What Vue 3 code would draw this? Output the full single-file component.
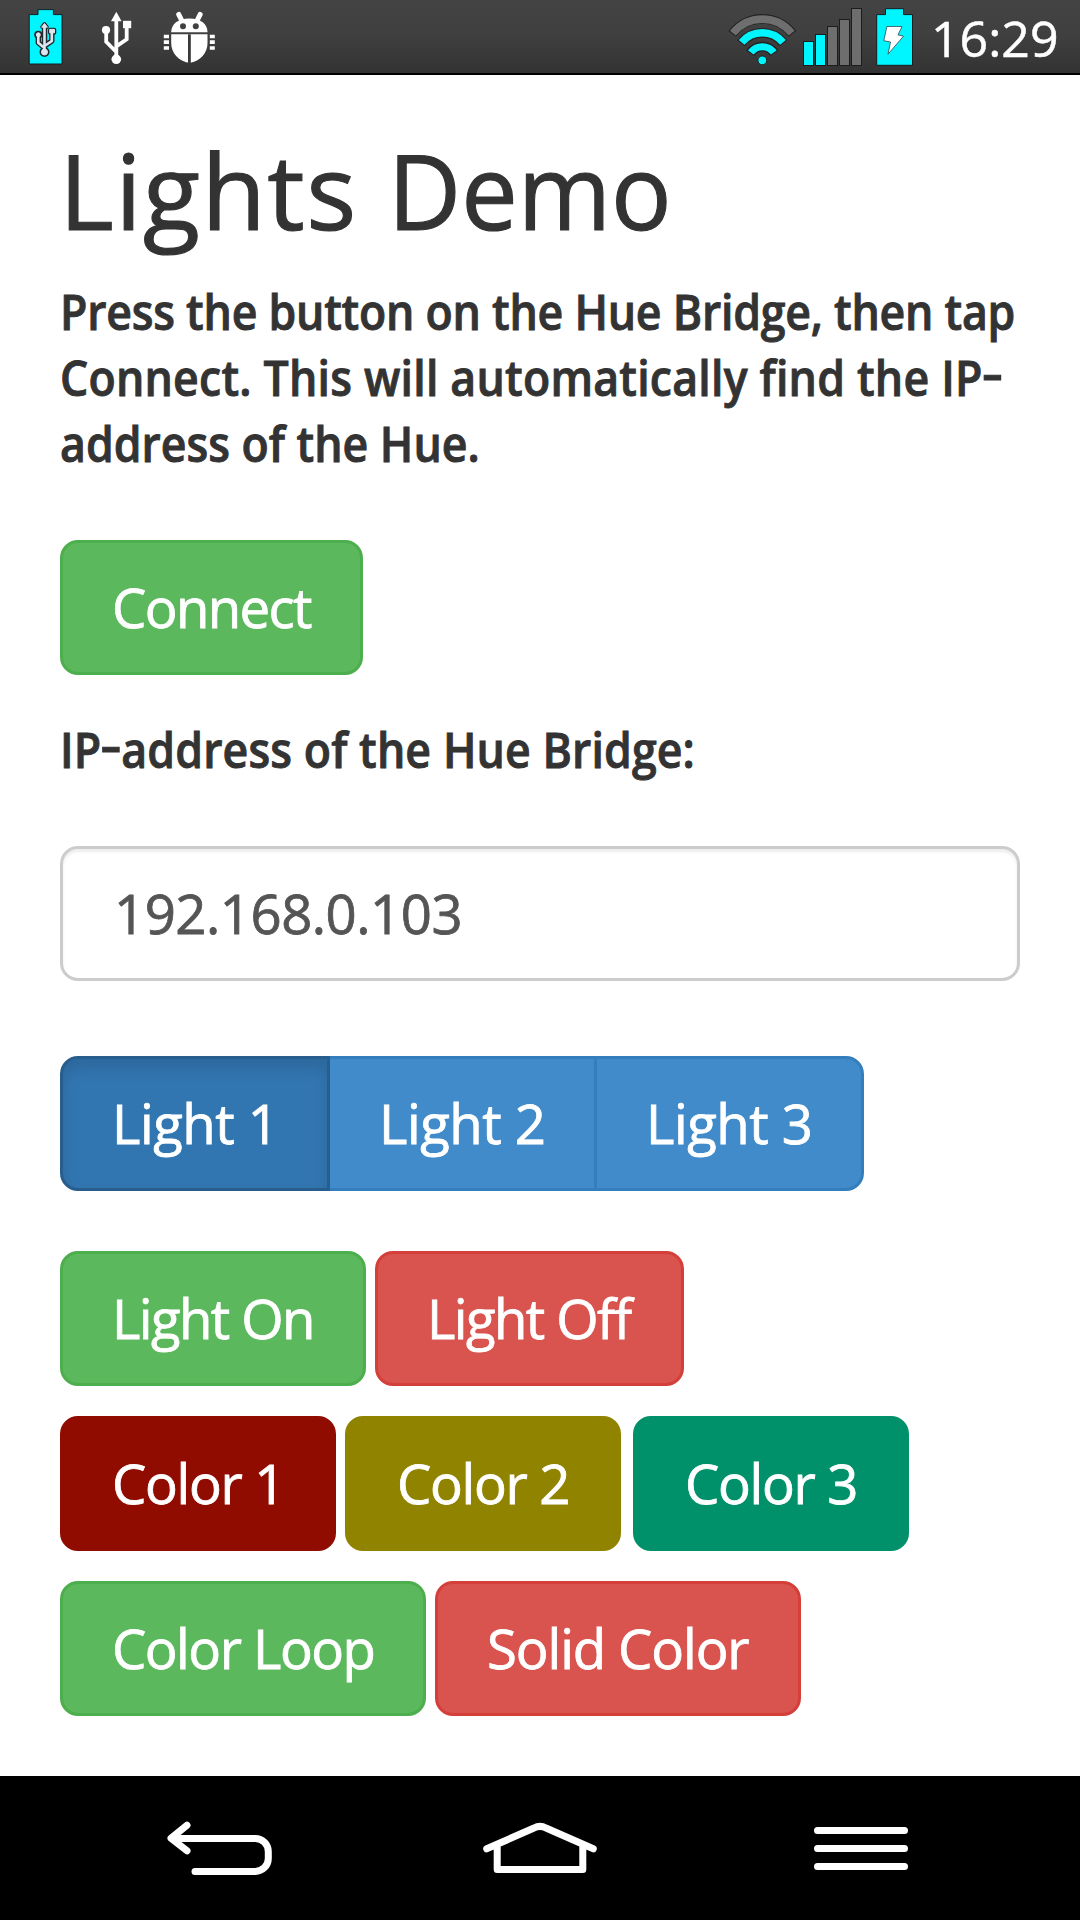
<script setup>
import { ref } from 'vue'

const address = ref('192.168.0.103')
const selected = ref(1)
const bars = [
  { x: 804, top: 41.5, on: true },
  { x: 816, top: 34.5, on: true },
  { x: 828, top: 26.5, on: false },
  { x: 840, top: 19.5, on: false },
  { x: 852, top: 8.5, on: false }
]
</script>

<template>
  <div class="screen">
    <header class="status-bar">
      <div class="icons">
        <svg class="usb-battery" viewBox="27 0 38 73" width="38" height="73">
          <path d="M29.2 14.6H38V9.6H53.4V14.6H62V64H29.2Z" fill="#00f6ff" stroke="#151c20" />
          <g fill="none" stroke="#20292e" stroke-width="5.4" stroke-linejoin="round">
            <path d="M44.5 26V51M38.3 35V42.8L44.5 48M51.8 31V41L44.5 46" />
            <path d="M44.5 23.8L47 27H42Z" stroke-width="3.6" />
            <circle cx="44.5" cy="52" r="2.8" stroke-width="4.4" /><circle cx="38.3" cy="34.8" r="1.9" stroke-width="4.4" />
            <path d="M50 29.7H54.3V32.7H50Z" stroke-width="4" />
          </g>
          <g fill="#dce6ee" stroke="#dce6ee">
            <path d="M44.5 26V51M38.3 35V42.8L44.5 48M51.8 31V41L44.5 46" fill="none" stroke-width="2.6" />
            <path d="M44.5 23.5L47.4 27.2H41.6Z" />
            <circle cx="44.5" cy="52" r="3" /><circle cx="38.3" cy="34.8" r="2" />
            <path d="M49.7 29.4H54.5V32.8H49.7Z" />
          </g>
        </svg>
        <svg class="usb" viewBox="100 0 34 73" width="34" height="73" fill="#fff">
          <path d="M116.3 20V57M106.2 30V41.8L116.3 52M126.7 26V39.3L116.3 46.3" fill="none" stroke="#fff" stroke-width="3.8" />
          <path d="M116.3 11.8L121.6 21.2H111Z" />
          <circle cx="116.3" cy="59.3" r="4.8" />
          <circle cx="106" cy="30" r="4.1" />
          <path d="M123 20.8H131.2V28.2H123Z" />
        </svg>
        <svg class="bug" viewBox="162 0 54 73" width="54" height="73" fill="#fff">
          <path d="M178.7 14.4L182.5 22M200.2 14.4L196.4 22" stroke="#fff" stroke-width="5" stroke-linecap="round" />
          <path d="M171.2 32.2C171.2 24 178 18.4 189.4 18.4S207.5 24 207.5 32.2Z" />
          <path d="M171.2 34.3H207.5V43C207.5 53 200.5 61 189.4 62.9C178.3 61 171.2 53 171.2 43Z" />
          <path d="M163.8 34.8H169V38.2H163.8ZM163.8 40.2H169V44H163.8ZM163.8 46.2H169V49.8H163.8ZM209.8 34.8H214.8V38.2H209.8ZM209.8 40.2H214.8V44H209.8ZM209.8 46.2H214.8V49.8H209.8Z" />
          <path d="M188 34.3H190.8V63H188Z" fill="#393939" />
          <circle cx="183" cy="26.3" r="3" fill="#404040" /><circle cx="195.8" cy="26.3" r="3" fill="#404040" />
        </svg>
      </div>
      <div class="icons">
        <svg class="wifi" viewBox="728 0 70 73" width="70" height="73" fill="none">
          <g stroke="#222" stroke-width="9.8">
            <path d="M732.2 33.9A37.8 37.8 0 0 1 792.4 33.9" />
            <path d="M741 43.2A27 27 0 0 1 783.6 43.2" />
            <path d="M750.2 53.2A14.5 14.5 0 0 1 774.4 53.2" />
          </g>
          <path d="M732.9 33.2A37.8 37.8 0 0 1 791.7 33.2" stroke="#6e6e6e" stroke-width="7.6" />
          <path d="M741.6 42.4A27 27 0 0 1 783 42.4" stroke="#00f6ff" stroke-width="7.4" />
          <path d="M750.8 52.4A14.5 14.5 0 0 1 773.8 52.4" stroke="#00f6ff" stroke-width="7.2" />
          <circle cx="762.3" cy="60.4" r="4.4" fill="#00f6ff" stroke="#222" />
        </svg>
        <svg class="signal" viewBox="802 0 62 73" width="62" height="73">
          <rect v-for="b in bars" :key="b.x" :x="b.x - 0.5" :y="b.top" width="10" :height="65.5 - b.top" :fill="b.on ? '#00f6ff' : '#6e6e6e'" stroke="#1c1c1c" />
        </svg>
        <svg class="battery" viewBox="875 0 39 73" width="39" height="73">
          <path d="M876.7 14.6H885.5V8.7H903.5V14.6H912.5V65.3H876.7Z" fill="#00f6ff" stroke="#151c20" />
          <path d="M886.9 26.5H902L898 34.9L903.5 36.2L888 54.2L890.5 42L883.8 40.7Z" fill="#fff" stroke="#31474d" stroke-width=".8" />
        </svg>
        <span class="clock">16:29</span>
      </div>
    </header>

    <main class="content">
      <h1><span class="word-a">Lights</span> <span class="word-b">Demo</span></h1>
      <p class="copy">
        <span class="line first">Press the button on the Hue Bridge, then tap</span>
        <span class="line second">Connect. This will automatically find the IP<span class="dash">-</span></span>
        <span class="line">address of the Hue.</span>
      </p>
      <button class="btn success connect">Connect</button>
      <label class="copy" for="ip"><span class="line label">IP<span class="dash">-</span>address of the Hue Bridge:</span></label>
      <input id="ip" v-model="address" type="text" />

      <div class="group">
        <button v-for="n in 3" :key="n" class="btn primary" :class="{ active: selected === n }" @click="selected = n">Light {{ n }}</button>
      </div>

      <div class="row">
        <button class="btn success on">Light On</button>
        <button class="btn danger off">Light Off</button>
      </div>
      <div class="row colors">
        <button class="btn red">Color 1</button>
        <button class="btn olive">Color 2</button>
        <button class="btn teal">Color 3</button>
      </div>
      <div class="row">
        <button class="btn success loop">Color Loop</button>
        <button class="btn danger solid">Solid Color</button>
      </div>
    </main>

    <nav class="nav-bar">
      <svg viewBox="160 0 120 144" width="120" height="144">
        <path d="M187 49.2L171 62.2L187 74.8M172 62.5H255.3A13 13 0 0 1 268.3 75.5V82.4A13 13 0 0 1 255.3 95.4H195" />
      </svg>
      <svg viewBox="480 0 120 144" width="120" height="144">
        <path d="M486.7 72.8L534 52Q540 48.8 546 52L593.3 72.8M497.2 69V93.4H582.8V69" />
      </svg>
      <svg viewBox="801 0 120 144" width="120" height="144">
        <path d="M817.5 54.5H904.5M817.5 72.5H904.5M817.5 90.5H904.5" />
      </svg>
    </nav>
  </div>
</template>

<style>
body {
  margin: 0;
  background: #fff;
}
</style>

<style scoped>
.screen {
  display: flex;
  flex-direction: column;
  width: 1080px;
  height: 1920px;
  overflow: hidden;
  background: #fff;
  color: #333;
  font-family: 'Open Sans', 'Noto Sans', sans-serif;
}
.status-bar {
  display: flex;
  justify-content: space-between;
  box-sizing: border-box;
  height: 75px;
  flex: none;
  border-bottom: 2px solid #000;
  background: linear-gradient(#434343 0%, #404040 45%, #333 100%);
}
.icons {
  display: flex;
}
.usb-battery { margin-left: 27px; }
.usb { margin-left: 35px; }
.bug { margin-left: 28px; }
.signal { margin-left: 4px; }
.battery { margin-left: 11px; }
.clock {
  width: 149px;
  margin-left: 17px;
  color: #fff;
  font-size: 50px;
  font-weight: 500;
  line-height: 77px;
  -webkit-text-stroke: 0.5px #fff;
}
.content {
  display: flex;
  flex: 1;
  flex-direction: column;
  align-items: flex-start;
  padding: 57px 60px 0;
}
h1 {
  margin: 0 0 31px -1px;
  font-size: 105px;
  font-weight: 400;
  line-height: 116px;
  white-space: nowrap;
  -webkit-text-stroke: 1.1px #333;
}
.word-a { letter-spacing: 1.4px; }
.word-b {
  display: inline-block;
  margin-left: 3px;
  transform: scaleX(0.96);
  transform-origin: left;
}
.copy {
  display: block;
  margin: 0;
  font-size: 48px;
  font-weight: 600;
  line-height: 66px;
  -webkit-text-stroke: 0.9px #333;
}
.line {
  display: block;
  width: max-content;
  transform: scaleX(0.93);
  transform-origin: left;
}
.first { letter-spacing: -0.25px; }
.second { letter-spacing: 0.23px; }
.label { letter-spacing: 0.12px; }
.dash {
  display: inline-block;
  margin: 0 3px;
  transform: translateY(-5px) scaleX(1.45);
}
.btn {
  box-sizing: border-box;
  height: 135px;
  margin: 0;
  padding: 0 0 1px 49px;
  border: 3px solid;
  border-radius: 18px;
  color: #fff;
  font: 400 54.5px 'Open Sans', 'Noto Sans', sans-serif;
  letter-spacing: -1.3px;
  text-align: left;
  white-space: nowrap;
  -webkit-text-stroke: 0.8px #fff;
}
.success { background: #5cb85c; border-color: #4cae4c; }
.danger { background: #d9534f; border-color: #d43f3a; }
.primary { background: #428bca; border-color: #357ebd; }
.red { background: #900c00; border-color: #900c00; }
.olive { background: #908300; border-color: #908300; }
.teal { background: #00916b; border-color: #00916b; }
.connect {
  width: 303px;
  margin: 63px 0 42px;
  letter-spacing: -1.6px;
}
input {
  box-sizing: border-box;
  width: 960px;
  height: 135px;
  margin: 63px 0 75px;
  padding: 0 48px 1px 51px;
  border: 3px solid #ccc;
  border-radius: 18px;
  outline: none;
  background: #fff;
  box-shadow: inset 0 3px 3px rgba(0, 0, 0, 0.075);
  color: #555;
  font: 400 54.5px 'Open Sans', 'Noto Sans', sans-serif;
  letter-spacing: -0.5px;
  -webkit-text-stroke: 0.8px #555;
}
.group {
  display: flex;
  margin-bottom: 60px;
}
.group .btn {
  width: 270px;
  letter-spacing: -0.5px;
}
.group .btn + .btn {
  margin-left: -3px;
  border-top-left-radius: 0;
  border-bottom-left-radius: 0;
}
.group .btn:not(:last-child) {
  border-top-right-radius: 0;
  border-bottom-right-radius: 0;
}
.group .active {
  z-index: 1;
  background: #3276b1;
  border-color: #285e8e;
  box-shadow: inset 0 9px 15px rgba(0, 0, 0, 0.125);
}
.row {
  display: flex;
  gap: 9px;
  margin-bottom: 30px;
}
.on { width: 306px; letter-spacing: -1.6px; }
.off { width: 309px; letter-spacing: -1.6px; }
.colors .btn { width: 276px; }
.teal { margin-left: 3px; }
.loop { width: 366px; letter-spacing: -1.5px; }
.solid { width: 366px; letter-spacing: -1.1px; }
.nav-bar {
  display: flex;
  flex: none;
  box-sizing: border-box;
  height: 144px;
  padding-left: 160px;
  gap: 200px;
  background: #000;
}
.nav-bar svg {
  fill: none;
  stroke: #fff;
  stroke-width: 7;
  stroke-linecap: round;
  stroke-linejoin: round;
}
.nav-bar svg:last-child { margin-left: 1px; }
</style>
